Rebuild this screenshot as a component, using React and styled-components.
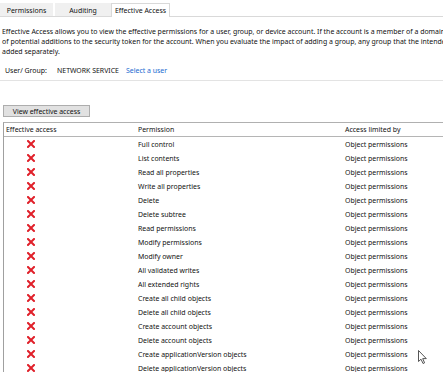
import React from "react";
import styled, { createGlobalStyle } from "styled-components";

const Global = createGlobalStyle`
  html, body { margin: 0; padding: 0; background: #ffffff; }
  body {
    font-family: "Noto Sans", "Liberation Sans", sans-serif;
    font-size: 6.95px;
    color: #111;
    width: 443px;
    height: 372px;
    overflow: hidden;
  }
`;

const Page = styled.div`
  position: relative;
  width: 443px;
  height: 372px;
  overflow: hidden;
  background: #fff;
`;

const TabStrip = styled.div`
  display: flex;
  align-items: flex-end;
  height: 17px;
  padding-top: 3px;
  box-sizing: border-box;
  border-bottom: 1px solid #d9d9d9;
`;

const Tab = styled.div`
  box-sizing: border-box;
  flex-shrink: 0;
  width: ${(p) => p.$w}px;
  margin-left: ${(p) => p.$ml || 0}px;
  height: ${(p) => (p.$active ? 14 : 13)}px;
  display: flex;
  align-items: center;
  justify-content: center;
  background: ${(p) => (p.$active ? "#ffffff" : "#f0f0f0")};
  border: 1px solid ${(p) => (p.$active ? "#d9d9d9" : "transparent")};
  border-bottom: none;
  margin-bottom: ${(p) => (p.$active ? "-1px" : "0")};
  white-space: nowrap;
`;

const Body = styled.div`
  padding-left: 2px;
`;

const Para = styled.div`
  margin-top: 10px;
  line-height: 10px;
  white-space: nowrap;
`;

const Line = styled.div``;

const UserRow = styled.div`
  display: flex;
  align-items: center;
  height: 12px;
  margin-top: 7px;
  padding-left: 3px;
  white-space: nowrap;
`;

const Label = styled.span`
  flex-shrink: 0;
  width: 52px;
`;

const Value = styled.span`
  flex-shrink: 0;
  margin-right: 7px;
`;

const Link = styled.span`
  flex-shrink: 0;
  color: #1a6ad0;
`;

const Separator = styled.div`
  height: 1px;
  background: #e3e3e3;
  margin-top: 4px;
  margin-left: -2px;
`;

const Button = styled.div`
  box-sizing: border-box;
  width: 87px;
  height: 12px;
  margin-top: 24px;
  margin-left: 1px;
  display: flex;
  align-items: center;
  justify-content: center;
  background: #e1e1e1;
  border: 1px solid #adadad;
  white-space: nowrap;
`;

const Table = styled.div`
  margin-top: 5px;
  margin-left: 1px;
  border-left: 1px solid #a0a0a0;
  border-top: 1px solid #b0b0b0;
`;

const HeaderRow = styled.div`
  display: grid;
  grid-template-columns: 134px 207px 1fr;
  height: 13px;
  align-items: center;
  border-bottom: 1px solid #b5b5b5;
  white-space: nowrap;
`;

const Row = styled.div`
  display: grid;
  grid-template-columns: 134px 207px 1fr;
  height: 14px;
  align-items: center;
  white-space: nowrap;
`;

const Cell = styled.div`
  padding-left: ${(p) => p.$pl || 0}px;
  display: flex;
  align-items: center;
`;

const XIcon = () => (
  <svg width="8" height="8" viewBox="0 0 8 8">
    <path d="M1 1 L7 7 M7 1 L1 7" stroke="#e0202a" strokeWidth="2" strokeLinecap="square" />
  </svg>
);

const Cursor = styled.svg`
  position: absolute;
  left: 418px;
  top: 350px;
`;

const perms = [
  "Full control",
  "List contents",
  "Read all properties",
  "Write all properties",
  "Delete",
  "Delete subtree",
  "Read permissions",
  "Modify permissions",
  "Modify owner",
  "All validated writes",
  "All extended rights",
  "Create all child objects",
  "Delete all child objects",
  "Create account objects",
  "Delete account objects",
  "Create applicationVersion objects",
  "Delete applicationVersion objects",
];

export default function App() {
  return (
    <Page>
      <Global />
      <TabStrip>
        <Tab $w={53}>Permissions</Tab>
        <Tab $w={56} $ml={2}>Auditing</Tab>
        <Tab $w={59} $active>Effective Access</Tab>
      </TabStrip>
      <Body>
        <Para>
          <Line>
            Effective Access allows you to view the effective permissions for a user, group, or device account. If the account is a member of a domain, you can also evaluate the impact
          </Line>
          <Line>
            of potential additions to the security token for the account. When you evaluate the impact of adding a group, any group that the intended user or group is a member of must be
          </Line>
          <Line>added separately.</Line>
        </Para>
        <UserRow>
          <Label>User/ Group:</Label>
          <Value>NETWORK SERVICE</Value>
          <Link>Select a user</Link>
        </UserRow>
        <Separator />
        <Button>View effective access</Button>
        <Table>
          <HeaderRow>
            <Cell $pl={2}>Effective access</Cell>
            <Cell>Permission</Cell>
            <Cell>Access limited by</Cell>
          </HeaderRow>
          {perms.map((p) => (
            <Row key={p}>
              <Cell $pl={23}>
                <XIcon />
              </Cell>
              <Cell>{p}</Cell>
              <Cell>Object permissions</Cell>
            </Row>
          ))}
        </Table>
      </Body>
      <Cursor width="10" height="15" viewBox="0 0 10 15">
        <path d="M0.5 0.5 L0.5 11.5 L3 9.2 L5 13.5 L6.6 12.8 L4.7 8.6 L8.3 8.6 Z" fill="#fff" stroke="#444" strokeWidth="0.9" />
      </Cursor>
    </Page>
  );
}
